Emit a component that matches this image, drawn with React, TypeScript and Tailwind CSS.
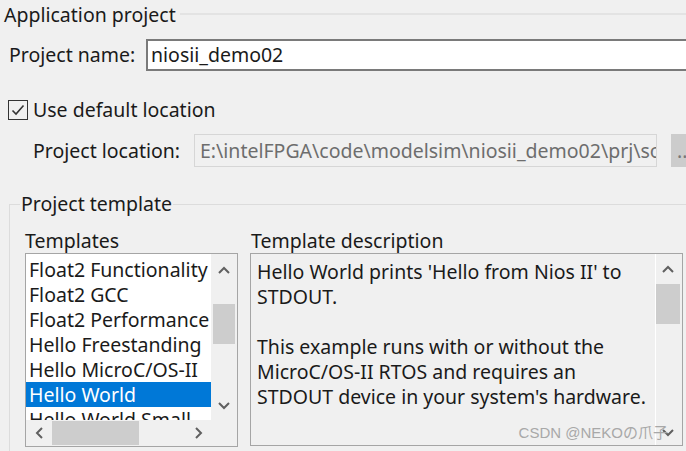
import React from "react";

const font = { fontFamily: '"Noto Sans", "Open Sans", "Noto Sans CJK SC", sans-serif' };

function Chevron({ dir }: { dir: "up" | "down" | "left" | "right" }) {
  const d =
    dir === "up"
      ? "M1 7 L6 2 L11 7"
      : dir === "down"
      ? "M1 2 L6 7 L11 2"
      : dir === "left"
      ? "M7 1 L2 6 L7 11"
      : "M2 1 L7 6 L2 11";
  const w = dir === "up" || dir === "down" ? 12 : 9;
  const h = dir === "up" || dir === "down" ? 9 : 12;
  return (
    <svg width={w} height={h} viewBox={`0 0 ${w} ${h}`}>
      <path d={d} fill="none" stroke="#606060" strokeWidth="2" />
    </svg>
  );
}

const templates = [
  "Float2 Functionality",
  "Float2 GCC",
  "Float2 Performance",
  "Hello Freestanding",
  "Hello MicroC/OS-II",
  "Hello World",
  "Hello World Small",
];

export default function App() {
  return (
    <div
      className="w-[686px] h-[451px] bg-[#f0f0f0] overflow-hidden text-[19.5px] text-[#1a1a1a] leading-none"
      style={font}
    >
      {/* Application project header */}
      <div className="flex items-center h-[30px] pl-[4px]">
        <span className="whitespace-nowrap shrink-0">Application project</span>
        <div className="flex-1 h-[2px] bg-[#e3e3e3] ml-[4px] mt-[-2px]" />
      </div>

      {/* Project name */}
      <div className="flex items-center mt-[9px] h-[32px]">
        <span className="w-[146px] shrink-0 pl-[9px] whitespace-nowrap">Project name:</span>
        <div className="w-[600px] shrink-0 h-[32px] bg-white border-[2px] border-[#7a7a7a] flex items-center pl-[3px] whitespace-nowrap">
          niosii_demo02
        </div>
      </div>

      {/* Use default location */}
      <div className="flex items-center mt-[29px] pl-[8px] h-[20px]">
        <div className="w-[20px] h-[20px] shrink-0 border border-[#333] bg-[#f0f0f0] flex items-center justify-center">
          <svg width="14" height="12" viewBox="0 0 14 12">
            <path d="M1.5 6.5 L5 10 L12.5 1.5" fill="none" stroke="#333" strokeWidth="1.6" />
          </svg>
        </div>
        <span className="ml-[5px] whitespace-nowrap">Use default location</span>
      </div>

      {/* Project location */}
      <div className="flex items-center mt-[14px] h-[33px]">
        <span className="w-[194px] shrink-0 pl-[33px] whitespace-nowrap">Project location:</span>
        <div className="w-[463px] shrink-0 h-[33px] border border-[#d6d6d6] flex items-center pl-[5px] overflow-hidden whitespace-nowrap text-[#6d6d6d]">
          E:\intelFPGA\code\modelsim\niosii_demo02\prj\software
        </div>
        <div className="ml-[14px] w-[40px] shrink-0 h-[33px] bg-[#cccccc] flex items-center pl-[6px] text-[#777]">
          ...
        </div>
      </div>

      {/* Project template group */}
      <fieldset className="ml-[9px] mt-[26px] w-[700px] h-[300px] border border-[#dcdcdc] p-0">
        <legend className="ml-[10px] px-[1px] whitespace-nowrap leading-[22px]">Project template</legend>
        <div className="flex mt-[16px] pl-[15px]">
          {/* Templates */}
          <div className="w-[212px] shrink-0">
            <div className="h-[20px] whitespace-nowrap">Templates</div>
            <div className="mt-[2px] w-[213px] h-[194px] border border-[#a5a5a5] bg-[#f0f0f0] flex flex-col">
              <div className="flex h-[166px]">
                <div className="w-[185px] bg-white overflow-hidden pt-[3px]">
                  {templates.map((t) => (
                    <div
                      key={t}
                      className={
                        "h-[25px] flex items-center pl-[3px] whitespace-nowrap " +
                        (t === "Hello World" ? "bg-[#0078d7] text-white" : "")
                      }
                    >
                      {t}
                    </div>
                  ))}
                </div>
                <div className="w-[26px] flex flex-col items-center">
                  <div className="h-[32px] flex items-center justify-center">
                    <Chevron dir="up" />
                  </div>
                  <div className="w-[22px] h-[40px] bg-[#cdcdcd] mt-[18px]" />
                  <div className="flex-1 flex items-end justify-center pb-[10px]">
                    <Chevron dir="down" />
                  </div>
                </div>
              </div>
              <div className="flex h-[25px]">
                <div className="w-[185px] flex items-center">
                  <div className="w-[26px] flex justify-center">
                    <Chevron dir="left" />
                  </div>
                  <div className="w-[87px] h-[24px] bg-[#cdcdcd]" />
                  <div className="flex-1" />
                  <div className="w-[26px] flex justify-center">
                    <Chevron dir="right" />
                  </div>
                </div>
              </div>
            </div>
          </div>

          {/* Template description */}
          <div className="ml-[13px] w-[433px] shrink-0">
            <div className="h-[20px] whitespace-nowrap pl-[1px]">Template description</div>
            <div className="mt-[2px] w-[433px] h-[193px] border border-[#a5a5a5] bg-[#f0f0f0] flex relative">
              <div className="w-[404px] pl-[6px] pt-[5px] leading-[25px] whitespace-nowrap">
                <div>Hello World prints 'Hello from Nios II' to</div>
                <div>STDOUT.</div>
                <div>&nbsp;</div>
                <div>This example runs with or without the</div>
                <div>MicroC/OS-II RTOS and requires an</div>
                <div>STDOUT device in your system's hardware.</div>
              </div>
              <div className="w-px bg-white" />
              <div className="w-[24px] flex flex-col items-center">
                <div className="h-[30px] flex items-center justify-center">
                  <Chevron dir="up" />
                </div>
                <div className="w-[24px] h-[40px] bg-[#cdcdcd]" />
                <div className="flex-1 flex items-end justify-center pb-[8px]">
                  <Chevron dir="down" />
                </div>
              </div>
              <div
                className="absolute right-[14px] bottom-[5px] text-[15px] text-[#a8a8a8] whitespace-nowrap"
                style={{ fontFamily: '"Liberation Sans", "Noto Sans CJK SC", sans-serif' }}
              >
                CSDN @NEKOの爪子
              </div>
            </div>
          </div>
        </div>
      </fieldset>
    </div>
  );
}
